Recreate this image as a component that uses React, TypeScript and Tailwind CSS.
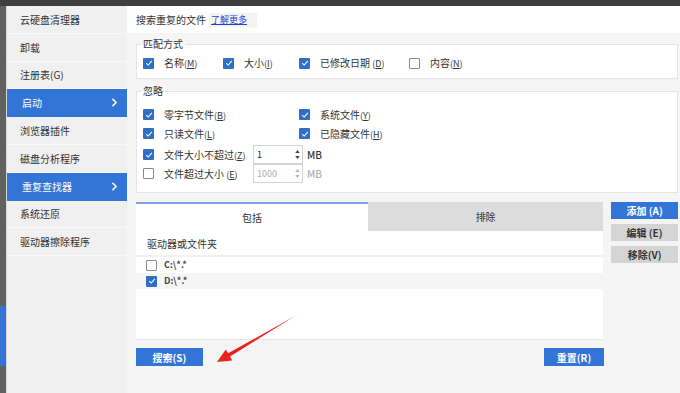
import React from 'react';
import { ChevronRight } from 'lucide-react';

const font = { fontFamily: '"Noto Sans CJK SC", "Noto Sans", sans-serif' };

const navItems = [
  { label: '云硬盘清理器' },
  { label: '卸载' },
  { label: '注册表(G)' },
  { label: '启动', active: true },
  { label: '浏览器插件' },
  { label: '磁盘分析程序' },
  { label: '重复查找器', active: true },
  { label: '系统还原' },
  { label: '驱动器擦除程序' },
];

const Check: React.FC<{ checked?: boolean }> = ({ checked }) =>
  checked ? (
    <span className="w-[11px] h-[11px] shrink-0 rounded-[1px] bg-[#2f6fc6] flex items-center justify-center">
      <svg viewBox="0 0 10 10" className="w-[8px] h-[8px]">
        <path d="M1.5 5.2 L4 7.6 L8.6 2.4" fill="none" stroke="white" strokeWidth="1.3" />
      </svg>
    </span>
  ) : (
    <span className="w-[11px] h-[11px] shrink-0 rounded-[1px] border border-[#8a8a8a] bg-white" />
  );

const Option: React.FC<{ w: string; checked?: boolean; text: string; hot: string; gap?: boolean }> = ({
  w,
  checked,
  text,
  hot,
  gap,
}) => (
  <div className={`${w} flex items-center gap-[10px] shrink-0`}>
    <Check checked={checked} />
    <span className="text-[10px] leading-none text-[#333]">
      {text}
      {gap ? ' ' : ''}
      <span className="text-[9px]">
        (<u>{hot}</u>)
      </span>
    </span>
  </div>
);

const Spin: React.FC<{ value: string; disabled?: boolean }> = ({ value, disabled }) => (
  <div className="flex items-center">
    <div className="w-[50px] h-[19px] border border-[#d4d4d4] bg-white flex items-center pl-[3px] pr-[2px]">
      <span className={`flex-1 text-[9px] ${disabled ? 'text-[#b0b0b0]' : 'text-[#222]'}`}>{value}</span>
      <div className="flex flex-col items-center gap-[3px] w-[6px]">
        <svg viewBox="0 0 6 4" className="w-[5px] h-[3px]">
          <path d="M0 4 L3 0 L6 4 Z" fill={disabled ? '#b8b8b8' : '#444'} />
        </svg>
        <svg viewBox="0 0 6 4" className="w-[5px] h-[3px]">
          <path d="M0 0 L3 4 L6 0 Z" fill={disabled ? '#b8b8b8' : '#444'} />
        </svg>
      </div>
    </div>
    <span className={`ml-[4px] text-[10px] font-medium ${disabled ? 'text-[#b0b0b0]' : 'text-[#333]'}`}>MB</span>
  </div>
);

const Group: React.FC<{ title: string; className?: string; children: React.ReactNode }> = ({
  title,
  className,
  children,
}) => (
  <fieldset className={`border border-[#e4e4e4] bg-white ${className ?? ''}`}>
    <legend className="ml-[4px] px-[2px] text-[10px] leading-[12px] text-[#333]">{title}</legend>
    {children}
  </fieldset>
);

export default function App() {
  return (
    <div className="relative w-[680px] h-[393px] overflow-hidden flex flex-col bg-[#f5f5f5]" style={font}>
      <div className="h-[6px] bg-[#3e3e3e] shrink-0" />
      <div className="flex flex-1 min-h-0">
        {/* far left strip */}
        <div className="w-[6px] flex flex-col shrink-0">
          <div className="h-[300px] bg-[#616161]" />
          <div className="h-[60px] bg-[#3375d6]" />
          <div className="flex-1 bg-[#616161]" />
        </div>

        {/* sidebar */}
        <div className="w-[121px] shrink-0 bg-[#f0f0f0] border-l border-[#d8d8d8]">
          {navItems.map((item) => (
            <div
              key={item.label}
              className={`h-[27.8px] flex items-center border-b text-[10px] ${
                item.active
                  ? 'bg-[#3375d6] text-white border-[#3375d6] pl-[15px] pr-[6px]'
                  : 'text-[#333] border-[#f8f8f8] pl-[13px]'
              }`}
            >
              <span className="flex-1">{item.label}</span>
              {item.active && <ChevronRight size={13} strokeWidth={3} color="white" />}
            </div>
          ))}
        </div>

        {/* main */}
        <div className="flex-1 flex flex-col min-w-0">
          <div className="h-[27px] bg-white flex items-center pl-[9px] shrink-0">
            <span className="text-[10px] text-[#333]">搜索重复的文件</span>
            <span className="ml-[3px] w-[48px] h-[14px] bg-[#f3f3f3] flex items-center pl-[2px]">
              <span className="text-[9px] text-[#1a44d6] underline leading-none">了解更多</span>
            </span>
          </div>

          <div className="flex-1 pl-[9px] pr-[2px] pt-[5px]">
            <Group title="匹配方式">
              <div className="flex items-center h-[14px] pl-[6px] mt-[6px] mb-[8px]">
                <Option w="w-[80px]" checked text="名称" hot="M" />
                <Option w="w-[76px]" checked text="大小" hot="I" />
                <Option w="w-[110px]" checked text="已修改日期" hot="D" gap />
                <Option w="w-[100px]" text="内容" hot="N" />
              </div>
            </Group>

            <Group title="忽略" className="mt-[6px]">
              <div className="pl-[6px] pt-[8px] pb-[9px] flex flex-col">
                <div className="h-[19px] flex items-center">
                  <Option w="w-[156px]" checked text="零字节文件" hot="B" />
                  <Option w="w-[120px]" checked text="系统文件" hot="Y" />
                </div>
                <div className="h-[19px] flex items-center">
                  <Option w="w-[156px]" checked text="只读文件" hot="L" />
                  <Option w="w-[120px]" checked text="已隐藏文件" hot="H" />
                </div>
                <div className="h-[19px] mt-[2px] flex items-center">
                  <Option w="w-[110px]" checked text="文件大小不超过" hot="Z" />
                  <Spin value="1" />
                </div>
                <div className="h-[19px] flex items-center">
                  <Option w="w-[110px]" text="文件超过大小" hot="E" gap />
                  <Spin value="1000" disabled />
                </div>
              </div>
            </Group>

            <div className="mt-[9px] flex gap-[8px]">
              <div className="w-[468px] h-[138px] bg-white border-b border-[#e6e6e6] flex flex-col">
                <div className="h-[29px] flex shrink-0">
                  <div className="flex-1 border-t-2 border-[#7ea3e6] flex items-center justify-center text-[10px] text-[#333]">
                    包括
                  </div>
                  <div className="w-[235px] bg-[#dcdcdc] flex items-center justify-center text-[10px] text-[#333]">
                    排除
                  </div>
                </div>
                <div className="h-[26px] flex items-center pl-[11px] text-[10px] text-[#333] border-b-2 border-[#f1f1f1]">
                  驱动器或文件夹
                </div>
                <div className="h-[16px] flex items-center pl-[10px] gap-[7px]">
                  <Check />
                  <span className="text-[9px] font-semibold text-[#444]">C:\*.*</span>
                </div>
                <div className="h-[16px] flex items-center pl-[10px] gap-[7px] bg-[#f5f5f5]">
                  <Check checked />
                  <span className="text-[9px] font-semibold text-[#444]">D:\*.*</span>
                </div>
              </div>

              <div className="w-[67px] flex flex-col gap-[5px]">
                <button className="h-[17px] bg-[#3375d6] text-white text-[10px] font-bold">添加 (A)</button>
                <button className="h-[17px] bg-[#d4d4d4] text-[#333] text-[10px] font-bold">编辑 (E)</button>
                <button className="h-[17px] bg-[#d4d4d4] text-[#333] text-[10px] font-bold">移除(V)</button>
              </div>
            </div>

            <div className="mt-[8px] w-[468px] flex justify-between">
              <button className="w-[67px] h-[18px] bg-[#3375d6] text-white text-[10px] font-bold">搜索(S)</button>
              <button className="w-[60px] h-[18px] bg-[#3375d6] text-white text-[10px] font-bold">重置(R)</button>
            </div>
          </div>
        </div>
      </div>

      {/* red annotation arrow */}
      <svg className="absolute inset-0 pointer-events-none" width="680" height="393" viewBox="0 0 680 393">
        <polygon
          points="295,316 230,356.4 232.3,360.4 217,362 225.8,349.4 228.2,353.3"
          fill="#e8231e"
        />
      </svg>
    </div>
  );
}
